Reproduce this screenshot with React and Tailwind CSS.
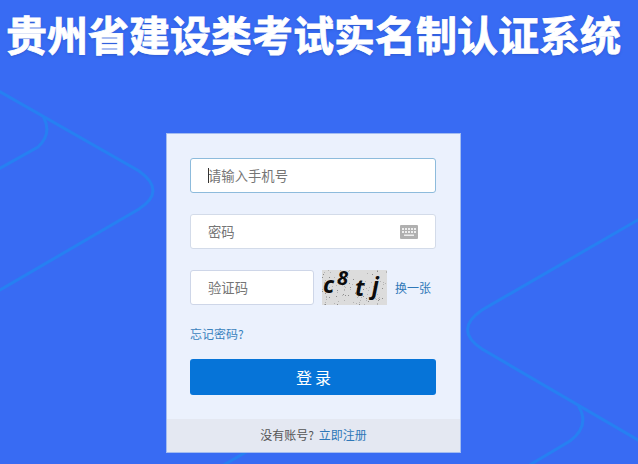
const FONT = '"Noto Sans CJK SC", "Liberation Sans", sans-serif';

function Lines() {
  return (
    <svg className="absolute inset-0 h-full w-full" viewBox="0 0 638 464" fill="none" stroke="#2680f2" strokeWidth="3" strokeLinecap="round" aria-hidden="true">
      <path d="M-5 89 L139 171 Q167 191 139 209 L-5 293" />
      <path d="M44 118 Q52 134 38 147 L-5 171" />
      <path d="M643 217 L482 310 Q453 330 482 349 L643 443" />
      <path d="M579 407 Q590 426 570 441 L528 466" />
      <path d="M222 466 L246 452" />
    </svg>
  );
}

function KeyboardIcon() {
  return (
    <svg width="18" height="14" viewBox="0 0 18 14" aria-hidden="true">
      <rect width="18" height="14" rx="1" fill="#b0b0b0" />
      <g fill="#eeeeee">
        <rect x="2" y="3" width="2" height="2" />
        <rect x="5" y="3" width="2" height="2" />
        <rect x="8" y="3" width="2" height="2" />
        <rect x="11" y="3" width="2" height="2" />
        <rect x="14" y="3" width="2" height="2" />
        <rect x="2" y="6" width="2" height="2" />
        <rect x="5" y="6" width="2" height="2" />
        <rect x="8" y="6" width="2" height="2" />
        <rect x="11" y="6" width="2" height="2" />
        <rect x="14" y="6" width="2" height="2" />
        <rect x="4" y="9.5" width="10" height="1.5" />
      </g>
    </svg>
  );
}

function Captcha() {
  const dots = [];
  let s = 17;
  for (let i = 0; i < 110; i++) {
    s = (s * 137 + 29) % 1009;
    const x = s % 65;
    s = (s * 137 + 29) % 1009;
    const y = s % 35;
    dots.push(<rect key={i} x={x} y={y} width="1" height="1" fill={i % 3 ? "#b4b4b4" : "#8d8d8d"} />);
  }
  return (
    <svg width="65" height="35" viewBox="0 0 65 35" className="block shrink-0 overflow-visible" role="img" aria-label="c8tj">
      <rect width="65" height="35" fill="#dcdcdc" />
      {dots}
      <g fill="#0b0b0b" fontFamily='"Open Sans", sans-serif' fontWeight="700" fontStyle="italic">
        <text x="1" y="23" fontSize="23">c</text>
        <text x="15" y="15" fontSize="20">8</text>
        <text x="33" y="26" fontSize="23">t</text>
        <text x="50" y="24" fontSize="23">j</text>
      </g>
    </svg>
  );
}

const inputCls = "h-full w-full rounded-[3px] bg-white pl-[17px] pr-3 text-[13.33px] text-[#555] outline-none placeholder:text-[#757575]";

export default function App() {
  return (
    <div className="relative h-[464px] w-[638px] overflow-hidden bg-[#386bf3]" style={{ fontFamily: FONT }}>
      <Lines />
      <div className="relative flex w-[627px] flex-col items-center">
        <h1 className="mt-[4px] h-[58px] whitespace-nowrap text-[41px] font-bold leading-[58px] text-white [-webkit-text-stroke:0.8px_white] [text-shadow:0_1px_3px_rgba(20,50,130,0.35)]">
          贵州省建设类考试实名制认证系统
        </h1>
        <div className="mt-[71px] flex h-[320px] w-[295px] flex-col border border-[#a3bcf0] bg-[#ebf1fd]">
          <div className="flex flex-1 flex-col px-[23px] pt-[24px]">
            <div className="relative h-[35px] w-[246px]">
              <input placeholder="请输入手机号" className={inputCls + " border border-[#8dbbdc]"} />
              <span className="absolute left-[18px] top-[10px] h-[15px] w-px bg-[#333]" />
            </div>
            <div className="relative mt-[21px] h-[35px] w-[246px]">
              <input placeholder="密码" className={inputCls + " border border-[#d3dbe9]"} />
              <span className="absolute right-[18px] top-[11px] leading-none"><KeyboardIcon /></span>
            </div>
            <div className="mt-[21px] flex h-[35px] items-center">
              <div className="h-[35px] w-[124px]">
                <input placeholder="验证码" className={inputCls + " border border-[#ced6e8]"} />
              </div>
              <div className="ml-[8px]"><Captcha /></div>
              <a className="ml-[8px] text-[12px] leading-none text-[#2f78b8]">换一张</a>
            </div>
            <a className="mt-[20px] h-[17px] text-[12px] leading-[17px] text-[#3a82bd]">忘记密码?</a>
            <button className="mt-[17px] flex h-[36px] w-[246px] items-center justify-center rounded-[3px] bg-[#0674d8] pb-px pl-[4px] text-[16px] tracking-[3px] text-white">
              登录
            </button>
          </div>
          <div className="flex h-[33px] items-center justify-center bg-[#e4e8f2] pb-px text-[12px] text-[#555]">
            <span>没有账号?</span>
            <a className="ml-[5px] text-[#2f78b8]">立即注册</a>
          </div>
        </div>
      </div>
    </div>
  );
}
